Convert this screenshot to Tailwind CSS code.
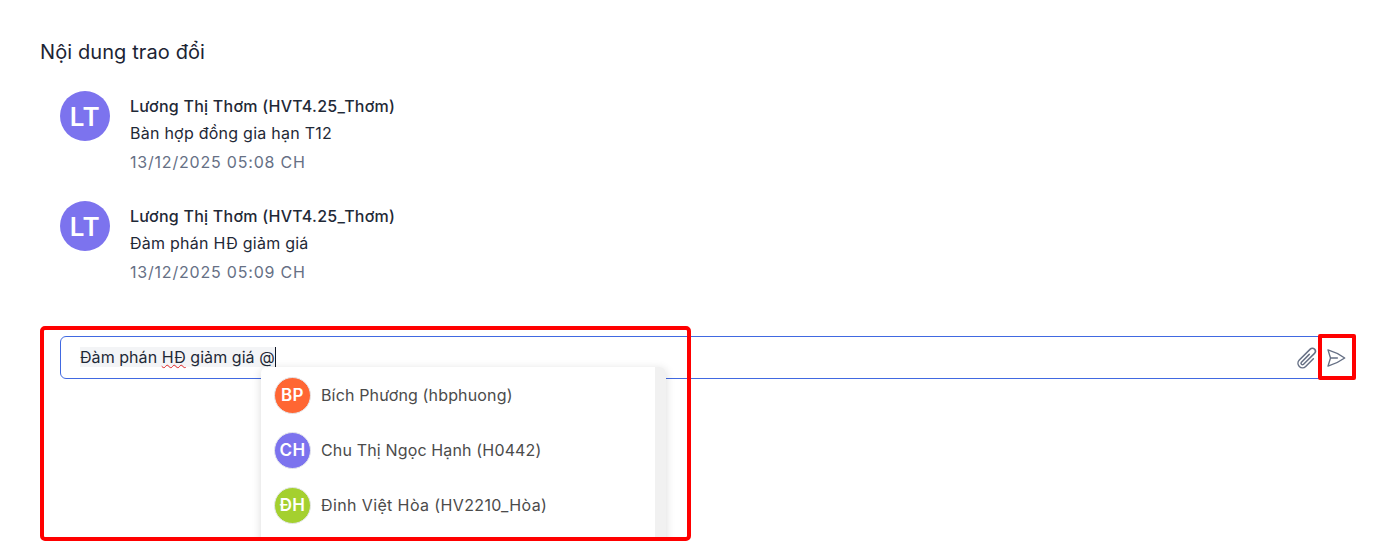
<!doctype html>
<html>

<head>
  <meta charset="UTF-8" />
  <meta name="viewport" content="width=device-width, initial-scale=1.0" />
  <script src="https://cdn.jsdelivr.net/npm/@tailwindcss/browser@4"></script>
  <title>Nội dung trao đổi</title>
</head>

<body>
  <div class="relative h-[541px] w-[1379px] overflow-hidden bg-white font-['Inter',sans-serif] text-[#1f2937]">
    <div class="px-10 pt-[38px]">
      <h2 class="text-[20px] leading-[28px] tracking-[0.1px] text-[#1c2434]">Nội dung trao đổi</h2>

      <div class="mt-[25px] flex flex-col gap-[30px] pl-5">
        <div class="flex h-[80px] gap-5">
          <div class="flex size-[50px] shrink-0 items-center justify-center rounded-full bg-[#7c73ee] text-[26px] font-semibold tracking-[0.5px] text-white">LT</div>
          <div class="text-[16px]">
            <div class="leading-[30px] font-medium tracking-[0.25px]">Lương Thị Thơm (HVT4.25_Thơm)</div>
            <div class="leading-[24px] tracking-[0.25px]">Bàn hợp đồng gia hạn T12</div>
            <div class="mt-[2px] leading-[30px] tracking-[0.8px] text-[#667085]">13/12/2025 05:08 CH</div>
          </div>
        </div>
        <div class="flex h-[80px] gap-5">
          <div class="flex size-[50px] shrink-0 items-center justify-center rounded-full bg-[#7c73ee] text-[26px] font-semibold tracking-[0.5px] text-white">LT</div>
          <div class="text-[16px]">
            <div class="leading-[30px] font-medium tracking-[0.25px]">Lương Thị Thơm (HVT4.25_Thơm)</div>
            <div class="leading-[24px] tracking-[0.25px]">Đàm phán HĐ giảm giá</div>
            <div class="mt-[2px] leading-[30px] tracking-[0.8px] text-[#667085]">13/12/2025 05:09 CH</div>
          </div>
        </div>
      </div>

      <div class="mt-[55px] ml-5 flex items-center">
        <div class="flex h-[43px] w-[1262px] shrink-0 items-center justify-between rounded-l-md border border-[#4169e1] pr-[2px] pl-[19px] text-[16px]">
          <div class="flex -translate-y-px items-center">
            <span class="bg-[#f3f4f6] leading-[20px] tracking-[0.05px]">Đàm phán <span class="underline decoration-wavy decoration-[#e02424] decoration-1">HĐ</span> giảm giá @</span>
            <span class="h-[20px] w-px bg-[#111827]"></span>
          </div>
          <svg class="size-6 text-[#667085]" viewBox="0 0 24 24" fill="none" stroke="currentColor" stroke-width="1.5" stroke-linecap="round" stroke-linejoin="round">
            <path d="M18.375 12.739l-7.693 7.693a4.5 4.5 0 01-6.364-6.364l10.94-10.94A3 3 0 1119.5 7.372L8.552 18.32m.009-.01l-.01.01m5.699-9.941l-7.81 7.81a1.5 1.5 0 002.112 2.13" />
          </svg>
        </div>
        <svg class="ml-[3px] size-[22px] shrink-0 text-[#667085]" viewBox="0 0 24 24" fill="none" stroke="currentColor" stroke-width="1.5" stroke-linecap="round" stroke-linejoin="round">
          <path d="M6 12L3.269 3.126A59.768 59.768 0 0121.485 12 59.77 59.77 0 013.27 20.876L5.999 12zm0 0h7.5" />
        </svg>
      </div>
    </div>

    <!-- mention dropdown -->
    <div class="absolute top-[367px] left-[261px] h-[180px] w-[405px] overflow-hidden rounded-md bg-white shadow-[0_2px_10px_rgba(0,0,0,0.15)]">
      <div class="absolute top-0 right-0 h-full w-[11px] bg-[#f1f1f1]"></div>
      <div class="flex flex-col text-[16px] tracking-[0.15px] text-[#4b4b4b]">
        <div class="flex h-[55px] items-center gap-[10px] pl-[13px]">
          <div class="flex size-[37px] translate-y-px items-center justify-center rounded-full border border-[#e5e7eb] bg-[#ff6633] text-[17px] font-semibold tracking-[0.3px] text-white">BP</div>
          <span>Bích Phương (hbphuong)</span>
        </div>
        <div class="flex h-[55px] items-center gap-[10px] pl-[13px]">
          <div class="flex size-[37px] translate-y-px items-center justify-center rounded-full border border-[#e5e7eb] bg-[#7c73ee] text-[17px] font-semibold tracking-[0.3px] text-white">CH</div>
          <span>Chu Thị Ngọc Hạnh (H0442)</span>
        </div>
        <div class="flex h-[55px] items-center gap-[10px] pl-[13px]">
          <div class="flex size-[37px] translate-y-px items-center justify-center rounded-full border border-[#e5e7eb] bg-[#a4d02f] text-[17px] font-semibold tracking-[0.3px] text-white">ĐH</div>
          <span class="tracking-[0.38px]">Đinh Việt Hòa (HV2210_Hòa)</span>
        </div>
      </div>
    </div>

    <!-- red annotation boxes -->
    <div class="absolute top-[326px] left-[40px] h-[215px] w-[651px] rounded-[5px] border-[4px] border-[#ff0000]"></div>
    <div class="absolute top-[334px] left-[1318px] h-[46px] w-[38px] rounded-[2px] border-[4px] border-[#ff0000]"></div>
  </div>
</body>

</html>
